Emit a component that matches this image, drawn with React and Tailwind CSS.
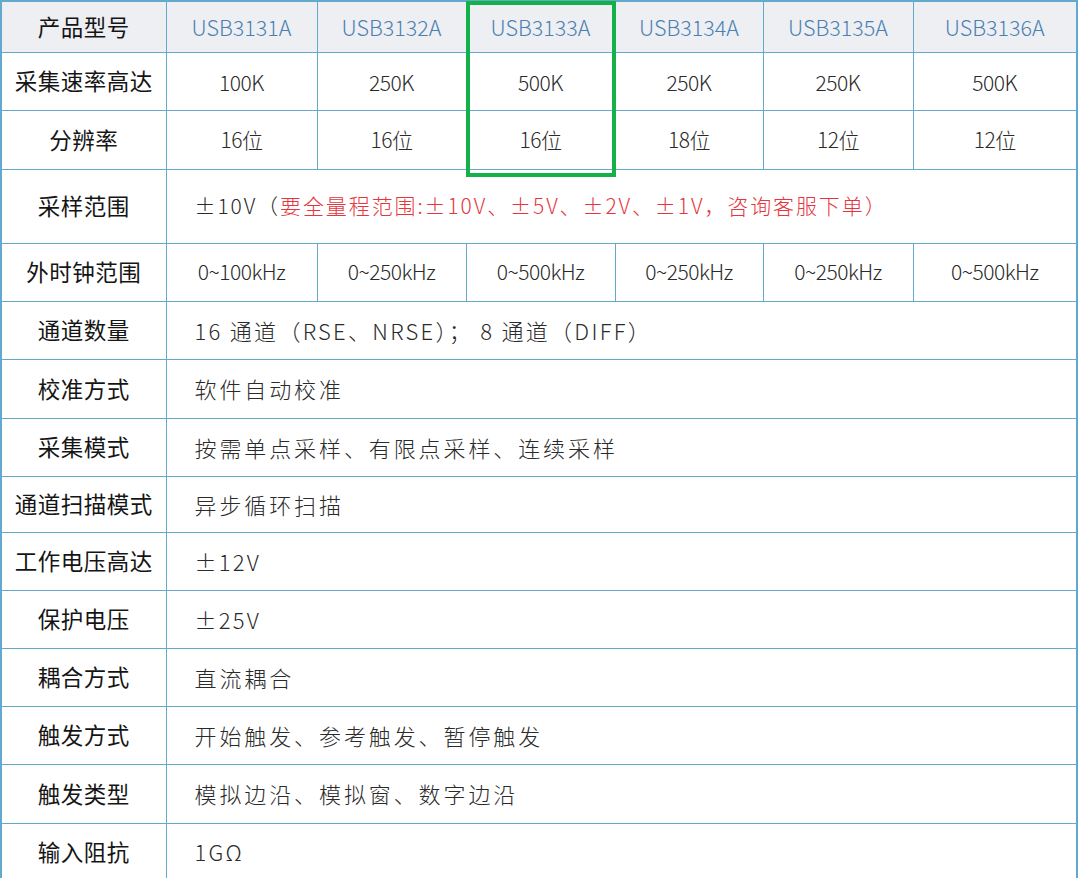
import React from "react";

const models = ["USB3131A", "USB3132A", "USB3133A", "USB3134A", "USB3135A", "USB3136A"];

const bd = "border border-[#62a9cc]";
const labelCls = `${bd} text-center align-middle text-[22.5px] font-normal text-[#151515] tracking-[0.5px] whitespace-nowrap`;
const cellCls = `${bd} text-center align-middle text-[21px] font-light text-[#2a2a2a] tracking-[-0.5px]`;
const spanBase = `${bd} text-left align-middle pl-[28px] font-light text-[#2a2a2a] whitespace-nowrap`;
const spanCJK = `${spanBase} text-[22px] tracking-[2.9px]`;
const spanNum = `${spanBase} text-[22px] tracking-[2.2px]`;

function Row({ label, h, children }) {
  return (
    <tr style={{ height: h }}>
      <td className={labelCls}>{label}</td>
      {children}
    </tr>
  );
}

export default function App() {
  return (
    <div
      className="relative w-[1080px] h-[878px] overflow-hidden bg-white"
      style={{ fontFamily: '"Noto Sans CJK SC", "Noto Sans", sans-serif' }}
    >
      <table className="border-collapse table-fixed w-[1076px] border-[2px] border-[#62a9cc]">
        <colgroup>
          <col className="w-[165px]" />
          <col className="w-[151px]" />
          <col className="w-[149px]" />
          <col className="w-[149px]" />
          <col className="w-[148px]" />
          <col className="w-[150px]" />
          <col className="w-[164px]" />
        </colgroup>
        <tbody>
          <tr className="bg-[#eeeff2] h-[51px]">
            <td className={labelCls}>产品型号</td>
            {models.map((m) => (
              <td key={m} className={`${bd} text-center align-middle text-[21.5px] font-light text-[#4a7fb2]`}>
                {m}
              </td>
            ))}
          </tr>
          <Row label="采集速率高达" h={58}>
            {["100K", "250K", "500K", "250K", "250K", "500K"].map((v, i) => (
              <td key={i} className={`${cellCls} pt-[3px]`}>{v}</td>
            ))}
          </Row>
          <Row label="分辨率" h={59}>
            {["16位", "16位", "16位", "18位", "12位", "12位"].map((v, i) => (
              <td key={i} className={cellCls}>{v}</td>
            ))}
          </Row>
          <Row label="采样范围" h={74}>
            <td colSpan={6} className={`${spanBase} text-[21px] tracking-[1.9px]`}>
              ±10V（<span className="text-[#e5363d]">要全量程范围:±10V、±5V、±2V、±1V，咨询客服下单）</span>
            </td>
          </Row>
          <Row label="外时钟范围" h={58}>
            {["0~100kHz", "0~250kHz", "0~500kHz", "0~250kHz", "0~250kHz", "0~500kHz"].map((v, i) => (
              <td key={i} className={cellCls}>{v}</td>
            ))}
          </Row>
          <Row label="通道数量" h={58}>
            <td colSpan={6} className={`${spanBase} text-[22px] tracking-[2.3px]`}>16 通道（RSE、NRSE）； 8 通道（DIFF）</td>
          </Row>
          <Row label="校准方式" h={59}>
            <td colSpan={6} className={spanCJK}>软件自动校准</td>
          </Row>
          <Row label="采集模式" h={58}>
            <td colSpan={6} className={spanCJK}>按需单点采样、有限点采样、连续采样</td>
          </Row>
          <Row label="通道扫描模式" h={56}>
            <td colSpan={6} className={spanCJK}>异步循环扫描</td>
          </Row>
          <Row label="工作电压高达" h={58}>
            <td colSpan={6} className={spanNum}>±12V</td>
          </Row>
          <Row label="保护电压" h={58}>
            <td colSpan={6} className={spanNum}>±25V</td>
          </Row>
          <Row label="耦合方式" h={58}>
            <td colSpan={6} className={spanCJK}>直流耦合</td>
          </Row>
          <Row label="触发方式" h={58}>
            <td colSpan={6} className={spanCJK}>开始触发、参考触发、暂停触发</td>
          </Row>
          <Row label="触发类型" h={59}>
            <td colSpan={6} className={spanCJK}>模拟边沿、模拟窗、数字边沿</td>
          </Row>
          <Row label="输入阻抗" h={58}>
            <td colSpan={6} className={spanNum}>1GΩ</td>
          </Row>
        </tbody>
      </table>
      <div className="absolute left-[466px] top-[1px] w-[150px] h-[176px] border-[4px] border-[#14b04a]" />
    </div>
  );
}
